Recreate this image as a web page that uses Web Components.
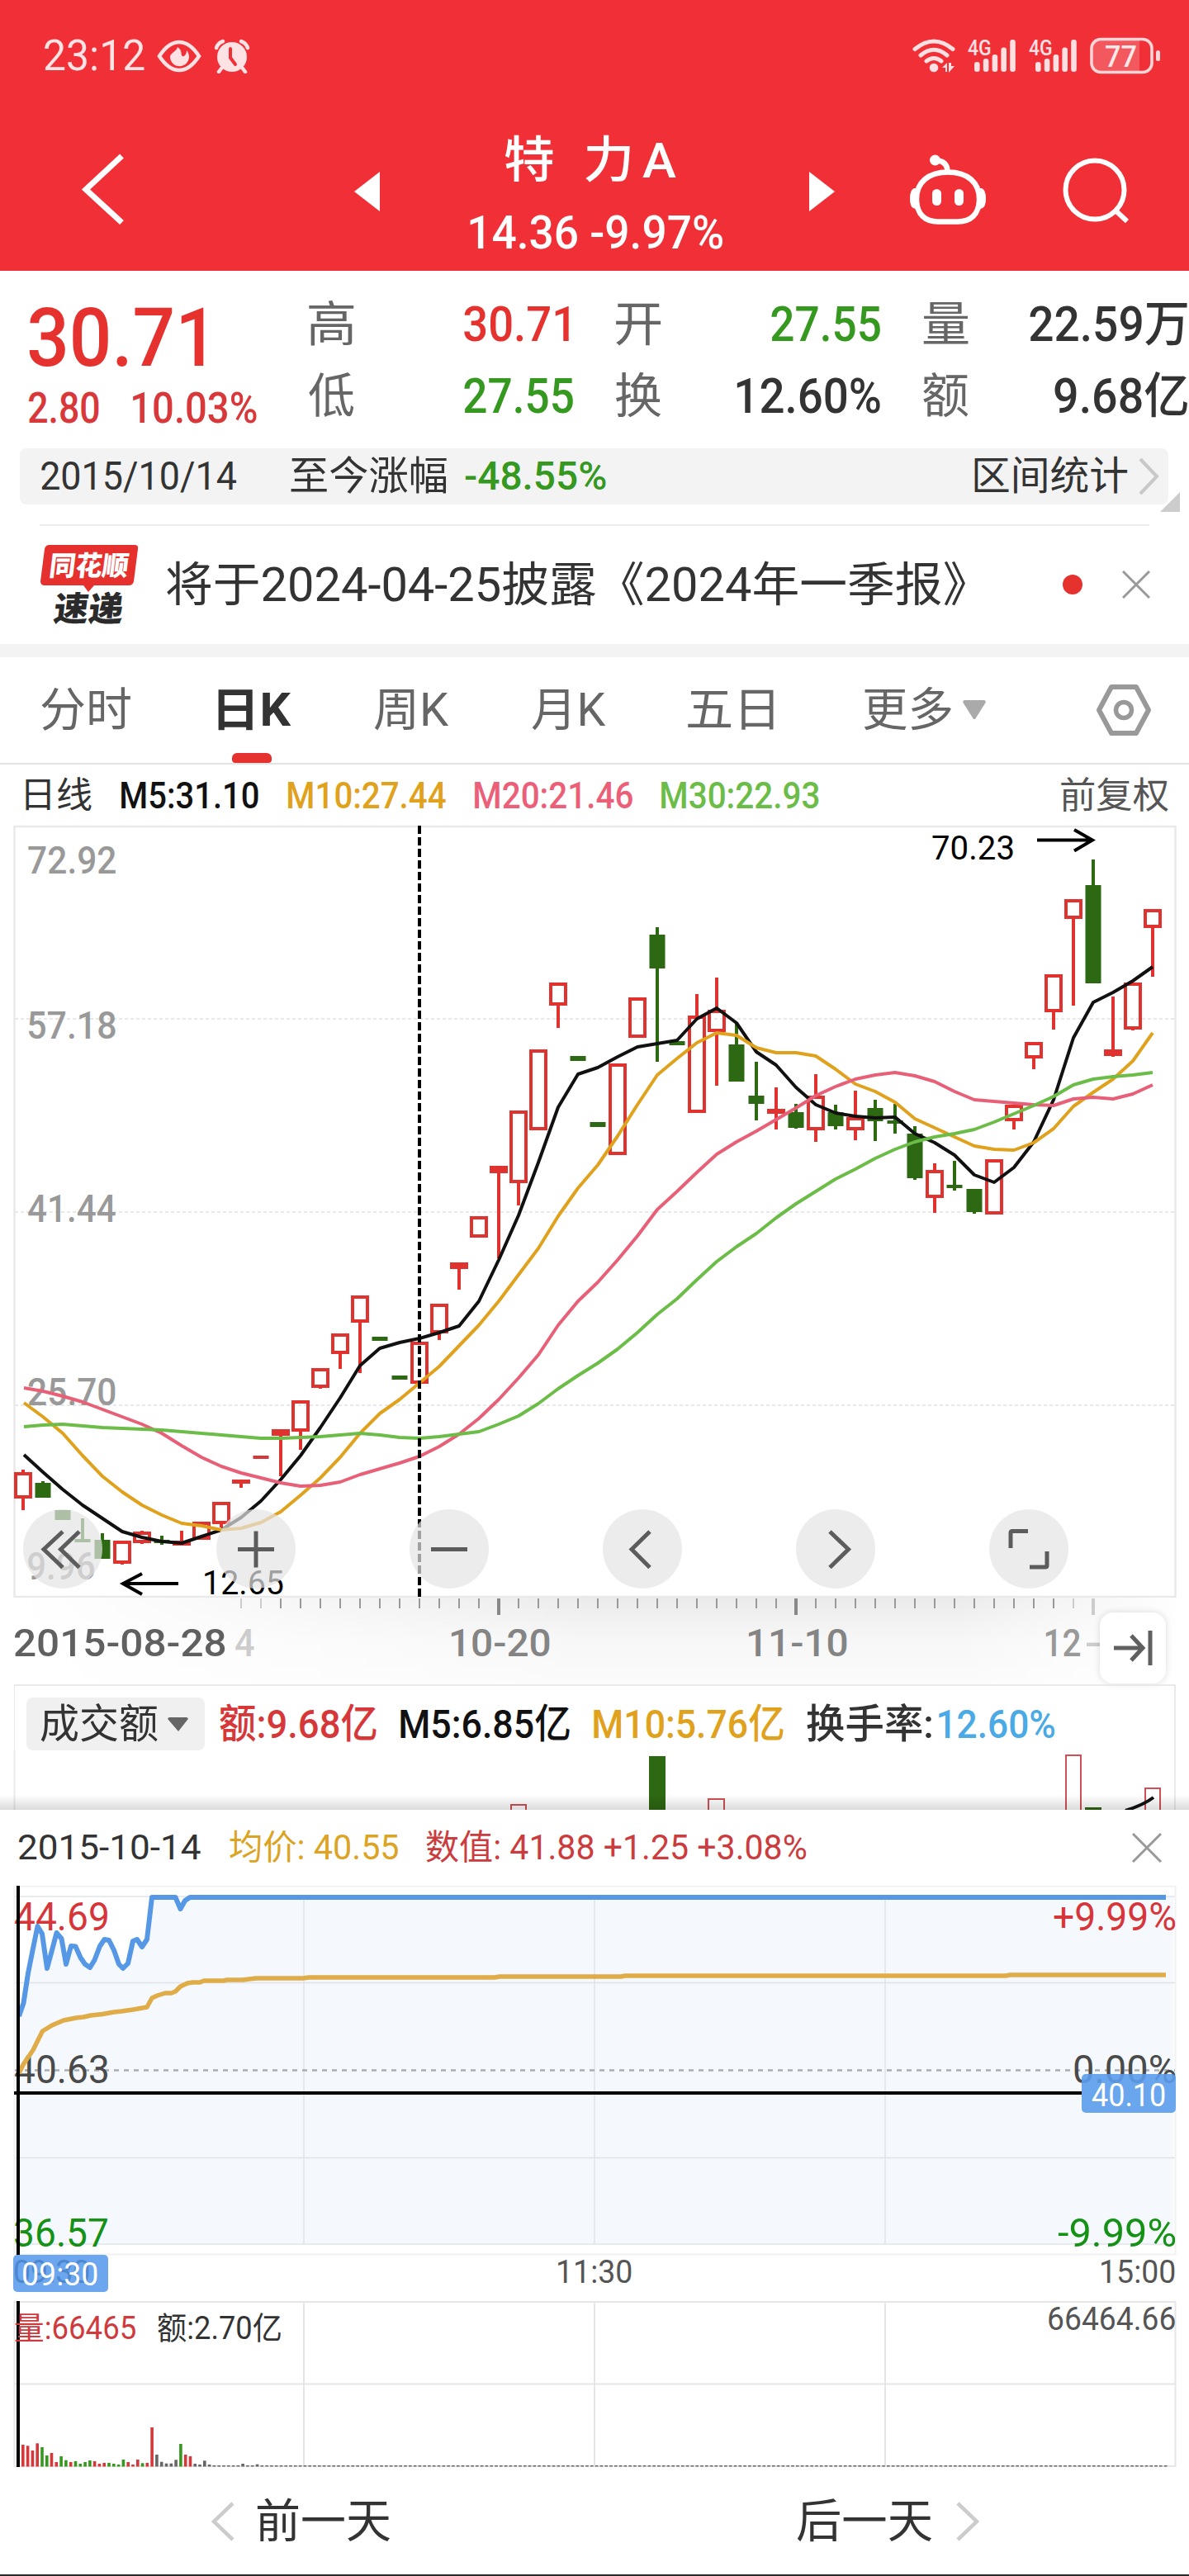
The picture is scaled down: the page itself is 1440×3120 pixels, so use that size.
<!DOCTYPE html>
<html lang="zh-CN">
<head>
<meta charset="utf-8">
<title>特力A 日K</title>
<style>
html,body{margin:0;padding:0;background:#fff}
body{width:1440px;height:3120px;overflow:hidden;font-family:Roboto,"Noto Sans CJK SC",sans-serif;color:#333}
</style>
</head>
<body>
<stock-page></stock-page>
<script>
const FONT = 'Roboto,"Noto Sans CJK SC",sans-serif';
const RED = '#e0322f', GREEN = '#2d6812', UP = '#e6322f', DOWN = '#35981f';
const ctx = document.createElement('canvas').getContext('2d');

// Ink box of a run of text: left overhang and painted width.
function ink(text, size, weight) {
  ctx.font = `${weight} ${size}px ${FONT}`;
  const m = ctx.measureText(text);
  return { left: m.actualBoundingBoxLeft, width: m.actualBoundingBoxLeft + m.actualBoundingBoxRight };
}
// SVG label whose painted width is w, vertically centred on cy.
function label(text, x, cy, w, size, fill, weight = 400, extra = '') {
  const k = ink(text, size, weight), s = w / k.width;
  return `<text transform="translate(${(x + k.left * s).toFixed(2)} ${(cy + size * 0.356).toFixed(2)}) scale(${s.toFixed(4)} 1)" font-size="${size}" font-weight="${weight}" fill="${fill}" ${extra}>${text}</text>`;
}
function define(name, html, after) {
  const t = document.createElement('template');
  customElements.define(name, class extends HTMLElement {
    constructor() {
      super();
      t.innerHTML = typeof html === 'function' ? html() : html;
      this.attachShadow({ mode: 'open' }).appendChild(t.content.cloneNode(true));
    }
    connectedCallback() { if (after) after(this); }
  });
}

// Text run fitted to a given painted width.
customElements.define('fit-text', class extends HTMLElement {
  connectedCallback() {
    const g = (n, d) => this.getAttribute(n) || d;
    const w = +g('w'), size = +g('s', 48), weight = g('b', '400'), ls = +g('ls', 0);
    const text = this.textContent, k = ink(text, size, weight), s = w / (k.width + ls * (text.length - 1));
    if (!this.shadowRoot) this.attachShadow({ mode: 'open' });
    this.shadowRoot.innerHTML = `<style>
      :host{display:block;flex:none;width:${w}px;height:${size}px;margin-left:${g('ml', 0)}px;color:${g('c', 'inherit')}}
      span{display:block;width:max-content;white-space:pre;font:${weight} ${size}px/${size}px ${FONT};letter-spacing:${ls}px;
        transform-origin:0 50%;transform:translateX(${k.left * s}px) scaleX(${s})}
    </style><span><slot></slot></span>`;
  }
});

define('status-bar', `<style>
  :host{display:flex;align-items:center;height:136px;color:#ffe3e4;padding:0 34px 0 54px;box-sizing:border-box}
  svg{display:block;flex:none}.sp{flex:1}
</style>
<fit-text w="121" s="52">23:12</fit-text>
<svg style="margin-left:15px" width="54" height="40" viewBox="0 0 54 40" fill="none" stroke="#ffe3e4" stroke-width="4.5"><path d="M3 20Q14 3 27 3T51 20Q40 37 27 37T3 20Z"/><path d="M25 9C24 14 18 15 16 20a11.5 11.5 0 1 0 20-7c0 5-3 8-5 7-3-2 1-6-6-11Z" fill="#ffe3e4" stroke="none"/></svg>
<svg style="margin-left:15px" width="44" height="42" viewBox="0 0 44 42"><g fill="none" stroke="#ffe3e4" stroke-width="4.5" stroke-linecap="round"><path d="M3 11Q5 5 11 3M41 11Q39 5 33 3"/><path d="M9 36l-3 4M35 36l3 4"/></g><circle cx="22" cy="22" r="18" fill="#ffe3e4"/><path d="M20 12v11l6 8" stroke="#f12f37" stroke-width="4" fill="none" stroke-linecap="round"/></svg>
<div class="sp"></div>
<svg width="302" height="46" viewBox="1105 45 302 46"><g fill="none" stroke="#ffe0e2" stroke-width="5" stroke-linecap="round"><path d="M1109 59.500Q1132 40.500 1155 59.500M1116 67Q1132 53.500 1148 67M1123 74Q1132 67 1141 74"/></g><circle cx="1132" cy="82" r="5.300" fill="#ffe0e2"/><path d="M1142 82l6-6v11h-2v-5zM1150 76v12l7-8h-4v-4z" fill="#ffe0e2"/>
<g id="sig"></g>
<rect x="1323" y="47.500" width="73" height="40" rx="11" fill="none" stroke="#ffd5d7" stroke-width="3.600"/><path d="M1334 49h47v37h-47q-9 0-9-9v-19q0-9 9-9z" fill="#fff" opacity=".2"/><rect x="1401" y="61" width="5" height="13" rx="2.500" fill="#ffd5d7"/></svg>`,
el => {
  let s = '';
  for (const o of [0, 74]) {
    s += label('4G', 1173 + o, 58, 28, 26, '#ffe0e2', 500);
    [75, 71, 66, 57.5, 48].forEach((y, i) => s += `<rect x="${1181 + o + i * 10.8}" y="${y}" width="6.600" height="${87 - y}" rx="3" fill="#ffe0e2"/>`);
  }
  s += label('77', 1340, 67.5, 37, 37, '#ffe8e8', 500);
  const t = document.createElementNS('http://www.w3.org/2000/svg', 'g');
  t.innerHTML = s;
  el.shadowRoot.querySelector('svg:last-of-type').appendChild(t);
});

define('title-bar', `<style>
  :host{display:flex;height:192px;color:#fff;align-items:flex-start}
  svg{display:block;flex:none}
  .mid{display:flex;flex-direction:column;align-items:flex-start;width:306px;margin-left:109px;padding-top:29px}
</style>
<svg style="margin-left:95px" width="60" height="192" viewBox="95 136 60 192"><path d="M147.500 189L104 229.500l43.500 40" fill="none" stroke="#fff" stroke-width="7"/></svg>
<svg style="margin-left:274px" width="31" height="192" viewBox="429 136 31 192"><path d="M460 208v48l-31-24z" fill="#fff"/></svg>
<div class="mid"><fit-text ml="42" w="208" s="60" b="500" ls="9.5">特 力A</fit-text><fit-text style="margin-top:29px" w="306" s="56" b="500">14.36 -9.97%</fit-text></div>
<svg style="margin-left:105px" width="31" height="192" viewBox="980 136 31 192"><path d="M980 208v48l31-24z" fill="#fff"/></svg>
<svg style="margin-left:89px" width="96" height="192" viewBox="1100 136 96 192"><g fill="none" stroke="#fff" stroke-width="6.500"><path d="M1148 208.500C1172 208.500 1186 221 1186 241C1186 260 1175 268.500 1160 268.500H1136C1121 268.500 1110 260 1110 241C1110 221 1124 208.500 1148 208.500Z"/><path d="M1147.500 208c0-9-5-13.500-15-14"/></g><circle cx="1132.500" cy="194" r="6.500" fill="#fff"/><path d="M1110 228h-3q-5 2-5 12.500t5 12h5zM1186 228h3q5 2 5 12.500t-5 12h-5z" fill="#fff"/><rect x="1129" y="229" width="11" height="20" rx="5.500" fill="#fff"/><rect x="1156" y="229" width="11" height="20" rx="5.500" fill="#fff"/></svg>
<svg style="margin-left:88px" width="90" height="192" viewBox="1284 136 90 192"><circle cx="1326" cy="230" r="35.500" fill="none" stroke="#fff" stroke-width="6"/><path d="M1350 254l15 14" stroke="#fff" stroke-width="6"/></svg>`);

define('quote-cell', `<style>:host{display:flex;width:320px;height:87px;align-items:center;justify-content:space-between}</style><slot></slot>`);
define('quote-panel', `<style>
  :host{display:flex;height:215px}
  .l{display:flex;flex-direction:column;flex:none;padding:32px 0 0 35px;width:374px;box-sizing:border-box}
  .s{display:flex;margin-top:10px}
  .g{display:grid;flex:none;grid-template-columns:repeat(3,320px);column-gap:52px;grid-auto-rows:87px;padding-top:21px;height:174px}
</style>
<div class="l"><fit-text w="212" s="99" b="500" c="${UP}">30.71</fit-text>
<div class="s"><fit-text w="85" s="51" b="500" c="#d9383a">2.80</fit-text><fit-text ml="41" w="150" s="51" b="500" c="#d9383a">10.03%</fit-text></div></div>
<div class="g">
<quote-cell><fit-text w="55" s="58" c="#666">高</fit-text><fit-text style="margin-right:5px" w="127" s="60" b="500" c="${UP}">30.71</fit-text></quote-cell>
<quote-cell><fit-text w="55" s="58" c="#666">开</fit-text><fit-text w="132" s="60" b="500" c="${DOWN}">27.55</fit-text></quote-cell>
<quote-cell><fit-text w="55" s="58" c="#666">量</fit-text><fit-text w="191" s="59" b="500">22.59万</fit-text></quote-cell>
<quote-cell><fit-text w="55" s="58" c="#666">低</fit-text><fit-text w="132" s="60" b="500" c="${DOWN}">27.55</fit-text></quote-cell>
<quote-cell><fit-text w="55" s="58" c="#666">换</fit-text><fit-text w="174" s="60" b="500">12.60%</fit-text></quote-cell>
<quote-cell><fit-text w="55" s="58" c="#666">额</fit-text><fit-text w="161" s="59" b="500">9.68亿</fit-text></quote-cell>
</div>`);

define('range-bar', `<style>
  :host{display:block;height:93px;position:relative}
  .b{display:flex;align-items:center;height:68px;margin:0 25px 0 24px;padding-left:26px;background:#f3f3f3;border-radius:8px;box-sizing:border-box}
  .t{position:absolute;left:1405px;top:53px}.ln{height:2px;background:#ebebeb;margin:24px 48px 0}
  .sp{flex:1}
</style>
<div class="b"><fit-text w="236" s="48">2015/10/14</fit-text><fit-text ml="66" w="189" s="48">至今涨幅</fit-text><fit-text ml="22" w="171" s="48" b="500" c="${DOWN}">-48.55%</fit-text><div class="sp"></div><fit-text w="186" s="48">区间统计</fit-text>
<svg style="margin:0 10px 0 12px" width="27" height="46" viewBox="0 0 27 46"><path d="M3 2l20 21L3 44" fill="none" stroke="#c8c8c8" stroke-width="4"/></svg></div>
<svg class="t" width="24" height="24"><path d="M24 0v24H0z" fill="#ccc"/></svg>
<div class="ln"></div>`);

define('news-row', `<style>
  :host{display:flex;align-items:center;height:144px;border-bottom:16px solid #f3f3f3}
  svg{display:block;flex:none}
</style>
<svg style="margin-left:46px" width="124" height="104" viewBox="46 656 124 104"><path d="M60 660H163q5 0 4 5l-5 39q-1 5-6 5H114l-7 8-6-8H54q-5 0-5-5l5-39q1-5 6-5z" fill="#e5302d"/><g id="t"></g></svg>
<fit-text ml="32" w="967" s="57">将于2024-04-25披露《2024年一季报》</fit-text>
<svg style="margin-left:118px" width="24" height="24"><circle cx="12" cy="12" r="12" fill="#e6322f"/></svg>
<svg style="margin-left:48px" width="34" height="34" viewBox="0 0 34 34"><path d="M1 1l32 32M33 1L1 33" stroke="#999" stroke-width="3"/></svg>`,
el => { el.shadowRoot.querySelector('#t').innerHTML =
  `<g transform="translate(86 0) skewX(-7)">${label('同花顺', 60, 685, 93, 33, '#fff', 900)}</g><g transform="translate(94 0) skewX(-7)">${label('速递', 62, 737, 84, 41, '#2b2b2b', 900)}</g>`; });

define('period-tabs', `<style>
  :host{display:flex;flex-direction:column;height:128px;border-bottom:2px solid #e3e3e3;box-sizing:content-box;justify-content:space-between}
  .r{display:flex;align-items:center;height:128px;flex:none;color:#666}
  .p{width:48px;height:12px;border-radius:6px 6px 4px 4px;background:#e6322f;margin:-12px 0 0 281px;flex:none}
</style>
<div class="r"><fit-text ml="50" w="108" s="56">分时</fit-text><fit-text ml="106" w="89" s="55" b="700" c="#333">日K</fit-text><fit-text ml="100" w="91" s="56">周K</fit-text><fit-text ml="100" w="90" s="56">月K</fit-text><fit-text ml="99" w="104" s="56">五日</fit-text><fit-text ml="109" w="106" s="56">更多</fit-text>
<svg style="margin-left:14px" width="28" height="24"><path d="M2 0H26q3 1 1 4L15 23h-2L1 4Q-1 1 2 0z" fill="#aaa"/></svg>
<svg style="margin-left:133px" width="68" height="64" viewBox="0 0 68 64"><path d="M19 4H49L64 32 49 60H19L4 32z" fill="none" stroke="#999" stroke-width="6" stroke-linejoin="round"/><circle cx="34" cy="32" r="9.500" fill="none" stroke="#999" stroke-width="5.500"/></svg></div>
<div class="p"></div>`);

define('ma-row', `<style>:host{display:flex;align-items:center;height:75px}</style>
<fit-text ml="31" w="80" s="43">日线</fit-text><fit-text ml="36" w="166" s="45" b="500" c="#111">M5:31.10</fit-text><fit-text ml="36" w="191" s="45" b="500" c="#e0a11c">M10:27.44</fit-text><fit-text ml="35" w="191" s="45" b="500" c="#ec5f78">M20:21.46</fit-text><fit-text ml="35" w="191" s="45" b="500" c="#6bbd48">M30:22.93</fit-text><fit-text ml="293" w="130" s="44" c="#555">前复权</fit-text>`);

// Candles: kind, body top, body bottom, high, low.
const K = `r1783-1815,1780,1829 g1796-1814,1794,1814 g1829-1841 g1864-1868,1839,1868 g1865-1888,1857,1888 r1866-1894,1866,1895 r1855-1869,1854,1870 g1865-1869,1860,1871 r1866-1872,1854,1872 r1843-1865 r1819-1846,1819,1850 r1792-1797,1792,1802 d1763-1767 r1731-1739,1731,1788 r1696-1734,1696,1756 r1657-1681,1657,1682 r1615-1640,1615,1658 r1569-1602,1569,1663 g1619-1624 g1666-1671 r1625-1676 r1579-1615,1579,1623 r1529-1537,1529,1562 r1473-1499 r1412-1421,1412,1524 r1345-1433,1345,1460 r1271-1369 r1190-1218,1190,1245 g1279-1285 g1359-1365 r1288-1399 r1208-1257 g1132-1173,1123,1286 g1261-1266 r1230-1348,1204,1348 r1223-1250,1184,1315 g1265-1310,1240,1310 g1327-1337,1286,1357 r1343-1349,1317,1368 g1347-1366,1337,1367 r1327-1369,1301,1383 g1347-1364,1338,1368 r1353-1369,1321,1381 g1342-1358,1332,1382 g1357-1361,1337,1373 g1373-1427,1364,1429 r1417-1451,1409,1469 g1435-1439,1406,1442 g1440-1468,1440,1470 r1404-1471 r1338-1358,1338,1368 r1262-1282,1262,1295 r1180-1226,1180,1247 r1089-1113,1089,1218 g1072-1191,1041,1191 r1271-1279,1207,1280 r1190-1247,1190,1248 r1101-1124,1101,1183`.split(' ');
const MA = [
['#111', '1762 1783 1804 1823 1839 1855 1862 1867 1869 1861 1853 1838 1818 1792 1763 1729 1693 1654 1633 1626 1621 1614 1606 1576 1526 1472 1408 1341 1301 1293 1280 1268 1264 1260 1234 1221 1239 1274 1290 1317 1338 1348 1352 1354 1353 1373 1384 1399 1423 1432 1414 1383 1332 1257 1214 1202 1188 1171'],
['#e0a11c', '1699 1716 1736 1763 1788 1807 1823 1835 1845 1848 1853 1851 1844 1831 1811 1790 1765 1736 1712 1695 1675 1655 1630 1605 1576 1544 1512 1473 1439 1411 1376 1338 1302 1282 1263 1251 1254 1269 1275 1275 1279 1295 1313 1322 1335 1355 1366 1377 1388 1392 1393 1384 1367 1340 1323 1307 1285 1251'],
['#e86078', '1681 1685 1691 1698 1707 1716 1725 1736 1751 1765 1776 1784 1790 1796 1800 1799 1795 1786 1779 1772 1764 1752 1737 1718 1695 1669 1641 1605 1576 1553 1526 1497 1465 1443 1420 1398 1383 1370 1356 1342 1327 1316 1307 1302 1299 1303 1310 1322 1332 1334 1336 1338 1339 1331 1329 1331 1325 1314'],
['#6bbd48', '1728 1726 1725 1727 1729 1730 1731 1732 1734 1736 1738 1740 1742 1742 1741 1740 1738 1736 1738 1741 1742 1740 1737 1734 1725 1715 1700 1682 1666 1651 1634 1614 1592 1573 1550 1528 1510 1494 1475 1458 1443 1428 1416 1403 1392 1383 1377 1373 1368 1359 1349 1339 1328 1314 1307 1304 1302 1299']];

function klineSvg() {
  let s = `<rect x="17.500" y="1001" width="1406" height="933" fill="none" stroke="#e9e9e9" stroke-width="2.500"/>`;
  for (const y of [1234, 1468, 1702]) s += `<path d="M18 ${y}H1423" stroke="#e8e8e8" stroke-width="2" stroke-dasharray="4 3"/>`;
  [['72.92', 1041], ['57.18', 1241], ['41.44', 1463], ['25.70', 1685]].forEach(([t, y]) => s += label(t, 34, y, 106, 47, '#999', 500));
  s += label('9.96', 34, 1896, 80, 47, '#999', 500);
  K.forEach((c, i) => {
    const x = 28 + 24 * i, [b, h, l] = c.slice(1).split(','), [t, e] = b.split('-').map(Number);
    if (c[0] === 'r') {
      if (h) { if (+h < t) s += `<path d="M${x} ${h}V${t}" stroke="${RED}" stroke-width="4"/>`; if (+l > e) s += `<path d="M${x} ${e}V${l}" stroke="${RED}" stroke-width="4"/>`; }
      s += e - t < 11 ? `<rect x="${x - 11}" y="${t}" width="22" height="${e - t}" fill="${RED}"/>`
        : `<rect x="${x - 9}" y="${t + 2}" width="18" height="${e - t - 4}" fill="none" stroke="${RED}" stroke-width="4"/>`;
    } else {
      const f = c[0] === 'd' ? '#d6383a' : GREEN;
      if (h) s += `<path d="M${x} ${h}V${l}" stroke="${f}" stroke-width="4"/>`;
      s += `<rect x="${x - 9.5}" y="${t}" width="19" height="${e - t}" fill="${f}"/>`;
    }
  });
  for (const [c, p] of MA) s += `<polyline points="${p.split(' ').map((y, i) => (29 + 24 * i - (i > 0)) + ',' + y).join(' ')}" fill="none" stroke="${c}" stroke-width="4" stroke-linejoin="round"/>`;
  s += `<path d="M508 1000V1934" stroke="#000" stroke-width="4" stroke-dasharray="10 4"/>`;
  s += label('70.23', 1129, 1026.5, 98, 41, '#000') + label('12.65', 248, 1916, 95, 41, '#000');
  s += `<g fill="none" stroke="#000" stroke-width="4"><path d="M1256 1017.500H1322M1301 1005l22 12.500-22 13"/><path d="M216 1918H150M172 1906l-23 12 23 13"/></g>`;
  return s;
}
define('k-line', () => `<style>:host{display:block;height:934px;position:relative}svg{display:block;font-family:${FONT}}
  nav{position:absolute;left:28px;top:827px;display:flex;gap:138px}
  .c{width:96px;height:96px;border-radius:50%;background:rgba(228,228,228,.7)}</style>
<svg width="1440" height="934" viewBox="0 1001 1440 934" overflow="visible">${klineSvg()}</svg>
<nav>${['M48 27L25 48.500l23 22M68 27L45.500 48.500l22.500 22', 'M26 48.500h44M48 26.500v44', 'M26 48.500h44', 'M57 27L35 48.500l22 22', 'M41 27l22.500 21.500L41 70.500', 'M47 26.500H28q-2 0-2 2V47M70 51v17q0 2-2 2H49'].map(d => `<div class="c"><svg width="96" height="96"><path d="${d}" fill="none" stroke="#5c5c5c" stroke-width="5"/></svg></div>`).join('')}</nav>`);

function dateSvg() {
  let s = `<defs><linearGradient id="v" x2="0" y2="1"><stop stop-color="#ebebeb"/><stop offset=".5" stop-color="#f7f7f7"/><stop offset="1" stop-color="#fbfbfb"/></linearGradient>
  <linearGradient id="h"><stop stop-color="#fff"/><stop offset=".12" stop-color="#fff" stop-opacity=".8"/><stop offset=".5" stop-color="#fff" stop-opacity="0"/><stop offset=".8" stop-color="#fff" stop-opacity="0"/><stop offset="1" stop-color="#fff"/></linearGradient></defs>
  <rect x="17" y="1935" width="1406" height="105" fill="url(#v)"/><rect x="16" y="1935" width="1424" height="105" fill="url(#h)"/>`;
  for (let i = 11; i < 55; i++) {
    const big = i === 24 || i === 39 || i === 54, faint = i < 13 || i > 52;
    s += `<path d="M${28 + 24 * i} 1936V${big ? 1956 : 1948}" stroke="${faint ? '#ccc' : big ? '#888' : '#999'}" stroke-width="${big ? 4 : 2}"/>`;
  }
  s += label('2015-08-28', 17, 1989, 256, 47, '#606060', 500) + label('4', 285, 1989, 23, 47, '#ccc', 500)
    + label('10-20', 546, 1989, 120, 47, '#848484', 500) + label('11-10', 906, 1989, 120, 47, '#848484', 500)
    + label('12', 1266, 1989, 42, 47, '#999', 500) + label('-', 1315, 1989, 18, 47, '#ccc', 500);
  return s;
}
define('date-axis', () => `<style>:host{display:block;height:105px;position:relative}svg{display:block;font-family:${FONT}}
  .e{position:absolute;left:1332px;top:18px;width:80px;height:86px;border-radius:16px;background:#fff;box-shadow:0 0 8px rgba(0,0,0,.14)}</style>
<svg width="1440" height="105" viewBox="0 1935 1440 105">${dateSvg()}</svg>
<div class="e"><svg width="80" height="86" viewBox="1332 1953 80 86"><path d="M1349 1996H1384M1370 1981l14 15-14 15M1393 1975v42" fill="none" stroke="#606060" stroke-width="5"/></svg></div>`);

define('turnover-panel', () => `<style>
  :host{display:flex;flex-direction:column;height:152px;position:relative;overflow:hidden}
  .r{display:flex;align-items:center;height:64px;margin:0 16px 0 17px;padding:14px 0 0 14px;border:solid #e9e9e9;border-width:2px 2px 0 1px;flex:none}
  .c{display:flex;align-items:center;height:64px;width:216px;background:#f0f0f0;border-radius:8px}
  svg{display:block}
  .sh{position:absolute;left:0;right:0;bottom:0;height:18px;background:linear-gradient(rgba(0,0,0,0),rgba(0,0,0,.14))}
</style>
<div class="r"><div class="c"><fit-text ml="17" w="142" s="49">成交额</fit-text><svg style="margin-left:12px" width="25" height="17"><path d="M2 0H23q3 1 1 3L13 17 1 3Q-1 1 2 0z" fill="#666"/></svg></div>
<fit-text ml="18" w="190" s="49" b="500" c="#d6383a">额:9.68亿</fit-text><fit-text ml="29" w="205" s="49" b="500" c="#111">M5:6.85亿</fit-text><fit-text ml="29" w="230" s="49" b="500" c="#e0a11c">M10:5.76亿</fit-text><fit-text ml="28" w="151" s="49" b="500">换手率:</fit-text><fit-text ml="9" w="140" s="49" b="500" c="#4aaae6">12.60%</fit-text></div>
<svg width="1440" height="72" viewBox="0 2120 1440 72"><path d="M17.500 2120v72M1423 2120v72" stroke="#e9e9e9" stroke-width="2"/><path d="M786 2127h20v65h-20zM1314 2189h20v3h-20z" fill="${GREEN}"/><g fill="none" stroke="#d05055" stroke-width="2"><path d="M619 2193v-7h18v7M858 2193v-14h19v14M1291 2193v-67h18v67M1387 2193v-27h18v27"/></g><path d="M1363 2193q22-7 34-16" fill="none" stroke="#111" stroke-width="4"/></svg>
<div class="sh"></div>`);

define('minute-head', `<style>:host{display:flex;align-items:center;height:92px}svg{display:block}</style>
<fit-text ml="22" w="221" s="42">2015-10-14</fit-text><fit-text ml="35" w="204" s="42" c="#dba424">均价: 40.55</fit-text><fit-text ml="34" w="460" s="42" c="#cb3c3e">数值: 41.88 +1.25 +3.08%</fit-text>
<svg style="margin-left:395px" width="36" height="36" viewBox="0 0 36 36"><path d="M1 1l34 34M35 1L1 35" stroke="#999" stroke-width="3"/></svg>`);

function minuteSvg() {
  const P = '23,2442 28.500,2426 34,2390 40,2360 45.500,2333 51,2342 57,2384 63,2362 68.500,2341 74.500,2348 80,2379 86,2357 91.500,2357.500 97.500,2371 103,2379 109,2383 114.500,2374 121,2357 126.500,2349 132,2350 138,2362 144,2379 149,2384 155,2378 161,2351 166,2349 172,2358 178,2349 184,2298 212.500,2298 218.500,2312 224,2302 230,2298 1412,2298';
  const A = '23,2511 28.500,2500 40,2483 51.500,2460 63,2453 77,2447 92,2444 101,2443 110,2441 124,2439.500 138,2437 147,2436 161,2434 178,2431 184,2420 190.500,2417 200,2414 207.500,2414 212.500,2412 218.500,2406 227,2402 234,2401 242,2401 247,2399 271,2399 275,2398 294,2398 310,2396 367,2396 374,2395 599,2395 605,2394 752,2394 757,2393 1218,2393 1223,2392 1412,2392';
  const B = 'r543 r547 r564 r538 g552 g582 r573 r606 g585 g599 r606 g603 g612 g606 g600 r603 r612 r609 g609 g612 g615 g597 r606 r615 r597 g610 r609 r480 k579 k605 k611 k611 k598 g540 r579 r585 k612 k615 k601 k615'.split(' ');
  const tone = { r: '#d6383a', g: '#35981f', k: '#666' };
  let s = `<rect x="17.500" y="2284.500" width="1406" height="446" fill="none" stroke="#f1f1f1" stroke-width="2"/>
  <polygon points="23,2717 ${P} 1421,2298 1421,2717" fill="#f5f9fd"/>
  <g stroke="#dfe4ea" stroke-width="1.500" fill="none"><path d="M18 2297H1423M18 2401.500H1423M18 2613.500H1423M18 2718H1423M368 2297V2718M720 2297V2718M1072 2297V2718"/></g>
  <g stroke="#e6e6e6" stroke-width="2" fill="none"><path d="M17.500 2788H1423.500V2987H17.500ZM368 2788V2987M720 2788V2987M1072 2788V2987M18 2887.500H1423"/></g>
  <path d="M18 2507.500H1423" stroke="#a8adb2" stroke-width="2.500" stroke-dasharray="6 6"/>`;
  s += label('44.69', 18, 2321, 112, 48, '#d6363a') + label('+9.99%', 1276, 2321, 148, 48, '#d6363a')
    + label('40.63', 18, 2506, 112, 48, '#4a4a4a') + label('0.00%', 1301, 2506, 123, 48, '#4a4a4a')
    + label('36.57', 18, 2704, 112, 48, '#159215') + label('-9.99%', 1281, 2704, 143, 48, '#159215')
    + label('11:30', 676, 2751, 89, 38, '#555') + label('15:00', 1334, 2751, 89, 38, '#555');
  s += `<polyline points="${P}" fill="none" stroke="#5698e6" stroke-width="6" stroke-linejoin="round"/><polyline points="${A}" fill="none" stroke="#e0ac48" stroke-width="5.500" stroke-linejoin="round"/>`;
  for (let i = 0; i < 240; i++) {
    const v = i < B.length ? +B[i].slice(1) : i === 46 ? 612 : i === 49 ? 614 : 618;
    const h = 2987.5 - (2780 + v / 3);
    s += `<rect x="${(26 + 5.79 * i).toFixed(1)}" y="${(2987.5 - h).toFixed(1)}" width="3.600" height="${h.toFixed(1)}" fill="${tone[i < B.length ? B[i][0] : 'k']}"/>`;
  }
  s += `<path d="M22 2284V2731M22 2787V2988M17 2535H1310" stroke="#000" stroke-width="4"/>`;
  s += label('量:66465', 18, 2819, 146, 38, '#cf3b3d') + label('额:2.70亿', 191, 2819, 149, 38, '#333') + label('66464.66', 1270, 2808, 153, 38, '#555');
  s += `<rect x="16" y="2731" width="115" height="45" rx="5" fill="#6ba6ee"/>` + label('09:30', 18, 2751, 90, 38, '#4d87d0') + label('09:30', 28, 2754, 90, 38, '#fff')
    + `<rect x="1310" y="2512" width="114" height="47" rx="5" fill="#5b9cec" opacity=".9"/>` + label('40.10', 1322, 2537, 89, 38, '#fff');
  return s;
}
define('minute-chart', () => `<style>:host,svg{display:block}:host{height:706px}svg{font-family:${FONT}}</style><svg width="1440" height="706" viewBox="0 2284 1440 706">${minuteSvg()}</svg>`);

define('day-nav', `<style>:host{display:flex;align-items:center;border-bottom:2px solid #2a2a2a;box-sizing:content-box;height:128px}svg{display:block}</style>
<svg style="margin-left:256px" width="28" height="48"><path d="M26 2L3 24l23 22" fill="none" stroke="#ccc" stroke-width="4.500"/></svg><fit-text ml="27" w="162" s="56">前一天</fit-text><fit-text ml="492" w="164" s="56">后一天</fit-text><svg style="margin-left:29px" width="28" height="48"><path d="M2 2l23 22L2 46" fill="none" stroke="#ccc" stroke-width="4.500"/></svg>`);

define('stock-page', `<style>:host{display:flex;flex-direction:column;width:1440px;height:3120px;overflow:hidden;background:#fff}:host>*{flex:none}header{background:#f12f37;height:328px}</style>
<header><status-bar></status-bar><title-bar></title-bar></header>
<quote-panel></quote-panel><range-bar></range-bar><news-row></news-row><period-tabs></period-tabs><ma-row></ma-row><k-line></k-line><date-axis></date-axis><turnover-panel></turnover-panel><minute-head></minute-head><minute-chart></minute-chart><day-nav></day-nav>`);
</script>
</body>
</html>
